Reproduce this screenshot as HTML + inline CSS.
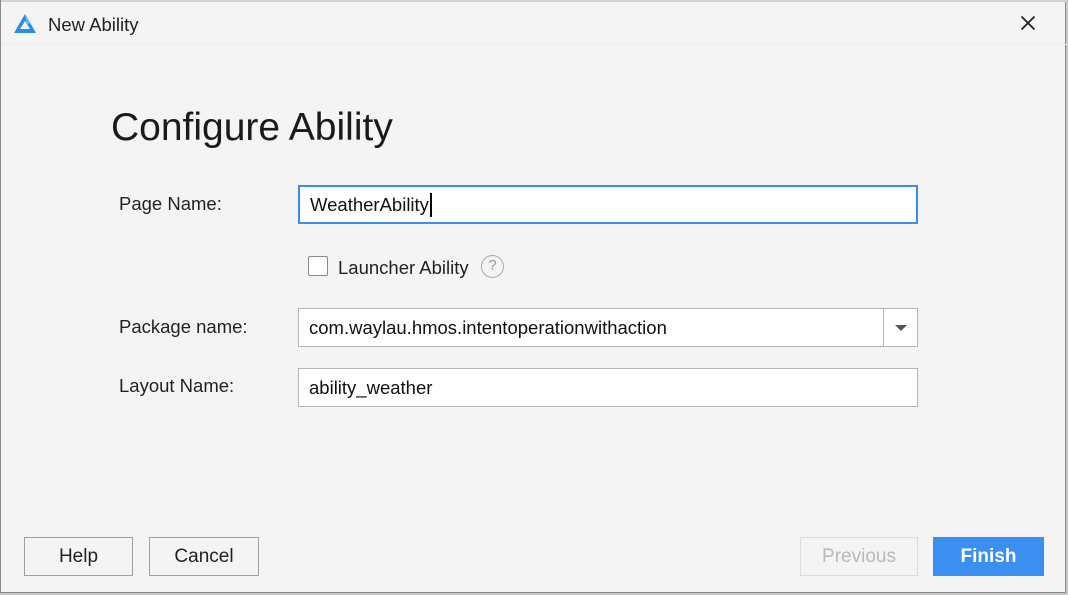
<!DOCTYPE html>
<html><head><meta charset="utf-8"><style>
*{box-sizing:border-box;margin:0;padding:0}
body{width:1068px;height:595px;background:#c8c8c8;font-family:"Liberation Sans",sans-serif;position:relative;overflow:hidden}
.win{position:absolute;left:0;top:0;width:1066px;height:593px;background:#f4f4f4;border:1px solid #8a8a8a;border-top:none}
.a{position:absolute}
.lbl{font-size:18.5px;color:#222}
.inp{background:#fff;border:1px solid #b4b4b4;font-size:18.5px;color:#111;padding-left:10px;display:flex;align-items:center}
.btn{border:1px solid #a0a0a0;background:#f4f4f4;font-size:19px;color:#222;display:flex;align-items:center;justify-content:center}
</style></head><body>
<div class="win">
<div class="a" style="left:0;top:0;width:1066px;height:2px;background:#d0d0d0"></div>
<div class="a" style="left:0;top:44px;width:1066px;height:1px;background:#ececec"></div>
<svg class="a" style="left:12px;top:13px" width="24" height="22" viewBox="0 0 24 22"><path d="M12 1 L23 20 L1 20 Z M12 8 L7 16 L17 16 Z" fill="#2a8de0" fill-rule="evenodd"/><path d="M12 1 L17 10 L14 12 Z" fill="#5cc0f0"/></svg>
<div class="a" style="left:47px;top:14px;font-size:18.5px;color:#222">New Ability</div>
<svg class="a" style="left:1019px;top:15px" width="16" height="16" viewBox="0 0 16 16"><path d="M1.5 1.5 L14.5 14.5 M14.5 1.5 L1.5 14.5" stroke="#222" stroke-width="1.8"/></svg>
<div class="a" style="left:110px;top:106px;font-size:39px;color:#1a1a1a">Configure Ability</div>
<div class="a lbl" style="left:118px;top:193px">Page Name:</div>
<div class="a inp" style="left:297px;top:185px;width:620px;height:39px;border:2px solid #3c8fe8">WeatherAbility<span style="display:inline-block;width:2px;height:24px;background:#000;margin-left:1px"></span></div>
<div class="a" style="left:307px;top:256px;width:20px;height:20px;border:1px solid #888;background:#fff;border-radius:2px"></div>
<div class="a lbl" style="left:337px;top:257px">Launcher Ability</div>
<div class="a" style="left:480px;top:255px;width:23px;height:23px;border:1.5px solid #aaa;border-radius:50%;font-size:15px;color:#999;text-align:center;line-height:20px">?</div>
<div class="a lbl" style="left:118px;top:316px">Package name:</div>
<div class="a inp" style="left:297px;top:308px;width:620px;height:39px">com.waylau.hmos.intentoperationwithaction</div>
<div class="a" style="left:882px;top:309px;width:1px;height:37px;background:#b4b4b4"></div>
<div class="a" style="left:894px;top:325px;width:0;height:0;border-left:6px solid transparent;border-right:6px solid transparent;border-top:6px solid #555"></div>
<div class="a lbl" style="left:118px;top:375px">Layout Name:</div>
<div class="a inp" style="left:297px;top:368px;width:620px;height:39px">ability_weather</div>
<div class="a btn" style="left:23px;top:537px;width:109px;height:39px">Help</div>
<div class="a btn" style="left:148px;top:537px;width:110px;height:39px">Cancel</div>
<div class="a btn" style="left:799px;top:537px;width:118px;height:39px;border-color:#dcdcdc;color:#b8b8b8">Previous</div>
<div class="a btn" style="left:932px;top:537px;width:111px;height:39px;border:none;background:#3b8ff0;color:#fff;font-weight:bold">Finish</div>
</div>
</body></html>
